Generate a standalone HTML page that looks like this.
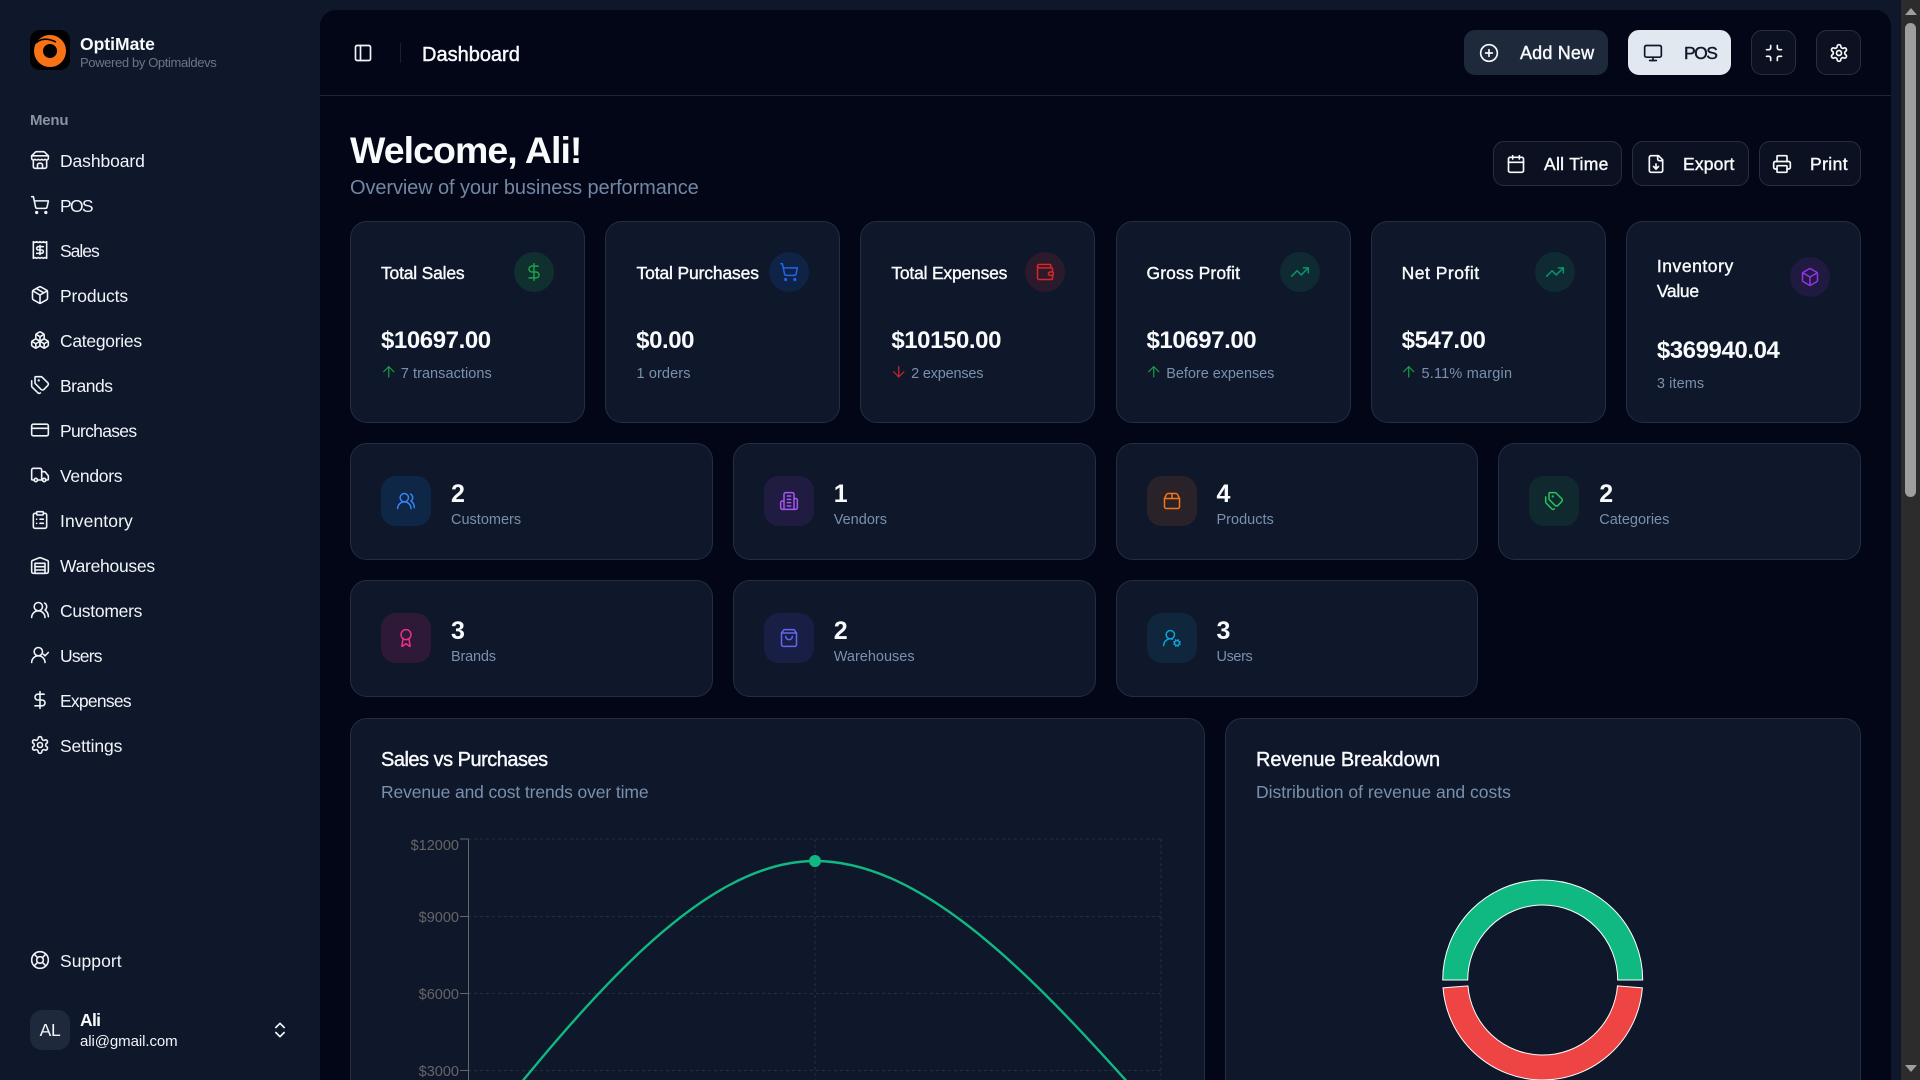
<!DOCTYPE html>
<html lang="en"><head><meta charset="utf-8"><title>OptiMate Dashboard</title>
<style>
*{box-sizing:border-box;margin:0;padding:0}
html,body{width:1920px;height:1080px;overflow:hidden;background:#0f172a}
body{font-family:"Liberation Sans",Arial,sans-serif;color:#f8fafc;position:relative}
svg.i{position:absolute;fill:none;stroke:currentColor;stroke-width:2;stroke-linecap:round;stroke-linejoin:round;overflow:visible}
.t{position:absolute;white-space:nowrap;line-height:20px;height:20px}
.m{-webkit-text-stroke:.4px currentColor}
.nav .t{left:60px;font-size:17.5px;letter-spacing:-.28px;color:#f1f5f9;margin-top:-.6px}
.nav svg.i{left:30px;width:20px;height:20px;color:#f1f5f9;stroke-width:1.9}
#panel{position:absolute;left:320px;top:10px;width:1571px;height:1070px;background:#020617;border-radius:16px 16px 0 0}
#hline{position:absolute;left:320px;top:95px;width:1571px;height:1px;background:#1e2433}
.b{position:absolute;height:45px;border-radius:11px;border:1px solid #262f40;background:#0b1120}
.b svg.i{width:20px;height:20px;top:11.5px}
.b .t{top:12px;font-size:17.5px}
.c{position:absolute;background:#0f172a;border:1px solid #242e40;border-radius:17px}
.sc{top:221px;height:202px;width:235.17px}
.sc .ti{left:30px;top:41px;font-size:17.5px}
.sc .v{left:30px;top:109px;font-size:24px;font-weight:700;letter-spacing:-.42px}
.sc .s{left:49.8px;top:142px;font-size:14.5px;color:#7a90ad}
.sc .ar{left:28.5px;top:141px;width:17.5px;height:17.5px;stroke-width:1.6}
.ci{position:absolute;width:40px;height:40px;border-radius:50%;top:30px;left:163px}
.ci svg.i{left:10px;top:10px;width:20px;height:20px;stroke-width:1.8}
.rc{width:362.75px;height:116.5px}
.bx{position:absolute;left:30px;top:32px;width:50px;height:50px;border-radius:15px}
.bx svg.i{left:15px;top:15px;width:20px;height:20px;stroke-width:1.8}
.rc .n{left:100px;top:40px;font-size:25px;font-weight:700}
.rc .l{left:100px;top:66px;font-size:14.5px;color:#7a90ad}
.cc{top:718px;height:362px;border-bottom:0;border-radius:17px 17px 0 0}
.cc .h{left:30px;top:31px;font-size:20px;-webkit-text-stroke:.4px currentColor}
.cc .d{left:30px;top:63px;font-size:17.5px;color:#7a90ad}
</style></head><body>

<!-- sidebar -->
<svg style="position:absolute;left:30px;top:30px" width="40" height="40" viewBox="0 0 40 40"><rect width="40" height="40" rx="10" fill="#000"/><circle cx="20" cy="21" r="11.5" fill="none" stroke="#f97316" stroke-width="9"/><path d="M6 13Q13 6 26 12" fill="none" stroke="#000" stroke-width="1.6"/><path d="M14 14Q22 9 27 15L22 14Q17 13 14 14Z" fill="#f97316"/></svg>
<div class="t" style="left:80px;top:34px;font-size:17.5px;font-weight:700">OptiMate</div>
<div class="t" style="left:80px;top:53px;font-size:13px;color:#6d7585;letter-spacing:-.37px">Powered by Optimaldevs</div>
<div class="t" style="left:30px;top:110.5px;font-size:15px;font-weight:700;color:#8a93a3;letter-spacing:-.2px">Menu</div>

<nav class="nav">
<svg class="i" style="top:150px" viewBox="0 0 24 24"><path d="m2 7 4.41-4.41A2 2 0 0 1 7.83 2h8.34a2 2 0 0 1 1.42.59L22 7"/><path d="M4 12v8a2 2 0 0 0 2 2h12a2 2 0 0 0 2-2v-8"/><path d="M15 22v-4a2 2 0 0 0-2-2h-2a2 2 0 0 0-2 2v4"/><path d="M2 7h20"/><path d="M22 7v3a2 2 0 0 1-2 2a2.7 2.7 0 0 1-1.59-.63.7.7 0 0 0-.82 0A2.7 2.7 0 0 1 16 12a2.7 2.7 0 0 1-1.59-.63.7.7 0 0 0-.82 0A2.7 2.7 0 0 1 12 12a2.7 2.7 0 0 1-1.59-.63.7.7 0 0 0-.82 0A2.7 2.7 0 0 1 8 12a2.7 2.7 0 0 1-1.59-.63.7.7 0 0 0-.82 0A2.7 2.7 0 0 1 4 12a2 2 0 0 1-2-2V7"/></svg>
<div class="t" style="top:151.5px;letter-spacing:-.1px">Dashboard</div>
<svg class="i" style="top:195px" viewBox="0 0 24 24"><circle cx="8" cy="21" r="1"/><circle cx="19" cy="21" r="1"/><path d="M2.05 2.05h2l2.66 12.42a2 2 0 0 0 2 1.58h9.78a2 2 0 0 0 1.95-1.57l1.65-7.43H5.12"/></svg>
<div class="t" style="top:196.5px;letter-spacing:-1.7px">POS</div>
<svg class="i" style="top:240px" viewBox="0 0 24 24"><path d="M4 2v20l2-1 2 1 2-1 2 1 2-1 2 1 2-1 2 1V2l-2 1-2-1-2 1-2-1-2 1-2-1-2 1Z"/><path d="M16 8h-6a2 2 0 1 0 0 4h4a2 2 0 1 1 0 4H8"/><path d="M12 17.5v-11"/></svg>
<div class="t" style="top:241.5px;letter-spacing:-1px">Sales</div>
<svg class="i" style="top:285px" viewBox="0 0 24 24"><path d="M11 21.73a2 2 0 0 0 2 0l7-4A2 2 0 0 0 21 16V8a2 2 0 0 0-1-1.73l-7-4a2 2 0 0 0-2 0l-7 4A2 2 0 0 0 3 8v8a2 2 0 0 0 1 1.73z"/><path d="M12 22V12"/><polyline points="3.29 7 12 12 20.71 7"/><path d="m7.5 4.27 9 5.15"/></svg>
<div class="t" style="top:286.5px;letter-spacing:-.13px">Products</div>
<svg class="i" style="top:330px" viewBox="0 0 24 24"><path d="M2.97 12.92A2 2 0 0 0 2 14.63v3.24a2 2 0 0 0 .97 1.71l3 1.8a2 2 0 0 0 2.06 0L12 19v-5.5l-5-3-4.03 2.42Z"/><path d="m7 16.5-4.74-2.85"/><path d="m7 16.5 5-3"/><path d="M7 16.5v5.17"/><path d="M12 13.5V19l3.97 2.38a2 2 0 0 0 2.06 0l3-1.8a2 2 0 0 0 .97-1.71v-3.24a2 2 0 0 0-.97-1.71L17 10.5l-5 3Z"/><path d="m17 16.5-5-3"/><path d="m17 16.5 4.74-2.85"/><path d="M17 16.5v5.17"/><path d="M7.97 4.42A2 2 0 0 0 7 6.13v4.37l5 3 5-3V6.13a2 2 0 0 0-.97-1.71l-3-1.8a2 2 0 0 0-2.06 0l-3 1.8Z"/><path d="M12 8 7.26 5.15"/><path d="m12 8 4.74-2.85"/><path d="M12 13.5V8"/></svg>
<div class="t" style="top:331.5px">Categories</div>
<svg class="i" style="top:375px" viewBox="0 0 24 24"><path d="M13.172 2a2 2 0 0 1 1.414.586l6.71 6.71a2.4 2.4 0 0 1 0 3.408l-4.592 4.592a2.4 2.4 0 0 1-3.408 0l-6.71-6.71A2 2 0 0 1 6 9.172V3a1 1 0 0 1 1-1z"/><path d="M2 7v6.172a2 2 0 0 0 .586 1.414l6.71 6.71a2.4 2.4 0 0 0 3.182.186"/><circle cx="10.5" cy="6.5" r=".5" fill="currentColor"/></svg>
<div class="t" style="top:376.5px;letter-spacing:-.5px">Brands</div>
<svg class="i" style="top:420px" viewBox="0 0 24 24"><rect x="2" y="5" width="20" height="14" rx="2"/><line x1="2" y1="10" x2="22" y2="10"/></svg>
<div class="t" style="top:421.5px;letter-spacing:-.7px">Purchases</div>
<svg class="i" style="top:465px" viewBox="0 0 24 24"><path d="M14 18V6a2 2 0 0 0-2-2H4a2 2 0 0 0-2 2v11a1 1 0 0 0 1 1h2"/><path d="M15 18H9"/><path d="M19 18h2a1 1 0 0 0 1-1v-3.65a1 1 0 0 0-.22-.624l-3.48-4.35A1 1 0 0 0 17.52 8H14"/><circle cx="17" cy="18" r="2"/><circle cx="7" cy="18" r="2"/></svg>
<div class="t" style="top:466.5px">Vendors</div>
<svg class="i" style="top:510px" viewBox="0 0 24 24"><rect x="8" y="2" width="8" height="4" rx="1"/><path d="M16 4h2a2 2 0 0 1 2 2v14a2 2 0 0 1-2 2H6a2 2 0 0 1-2-2V6a2 2 0 0 1 2-2h2"/><path d="M12 11h4"/><path d="M12 16h4"/><path d="M8 11h.01"/><path d="M8 16h.01"/></svg>
<div class="t" style="top:511.5px;letter-spacing:.1px">Inventory</div>
<svg class="i" style="top:555px" viewBox="0 0 24 24"><path d="M22 8.35V20a2 2 0 0 1-2 2H4a2 2 0 0 1-2-2V8.35A2 2 0 0 1 3.26 6.5l8-3.2a2 2 0 0 1 1.48 0l8 3.2A2 2 0 0 1 22 8.35Z"/><path d="M6 18h12"/><path d="M6 14h12"/><rect x="6" y="10" width="12" height="12"/></svg>
<div class="t" style="top:556.5px">Warehouses</div>
<svg class="i" style="top:600px" viewBox="0 0 24 24"><path d="M18 21a8 8 0 0 0-16 0"/><circle cx="10" cy="8" r="5"/><path d="M22 20c0-3.37-2-6.5-4-8a5 5 0 0 0-.45-8.3"/></svg>
<div class="t" style="top:601.5px">Customers</div>
<svg class="i" style="top:645px" viewBox="0 0 24 24"><path d="M2 21a8 8 0 0 1 16 0"/><circle cx="10" cy="8" r="5"/><path d="m16 11 2 2 4-4"/></svg>
<div class="t" style="top:646.5px;letter-spacing:-.8px">Users</div>
<svg class="i" style="top:690px" viewBox="0 0 24 24"><line x1="12" y1="2" x2="12" y2="22"/><path d="M17 5H9.5a3.5 3.5 0 0 0 0 7h5a3.5 3.5 0 0 1 0 7H6"/></svg>
<div class="t" style="top:691.5px;letter-spacing:-.75px">Expenses</div>
<svg class="i" style="top:735px" viewBox="0 0 24 24"><path d="M12.22 2h-.44a2 2 0 0 0-2 2v.18a2 2 0 0 1-1 1.73l-.43.25a2 2 0 0 1-2 0l-.15-.08a2 2 0 0 0-2.73.73l-.22.38a2 2 0 0 0 .73 2.73l.15.1a2 2 0 0 1 1 1.72v.51a2 2 0 0 1-1 1.74l-.15.09a2 2 0 0 0-.73 2.73l.22.38a2 2 0 0 0 2.73.73l.15-.08a2 2 0 0 1 2 0l.43.25a2 2 0 0 1 1 1.73V20a2 2 0 0 0 2 2h.44a2 2 0 0 0 2-2v-.18a2 2 0 0 1 1-1.73l.43-.25a2 2 0 0 1 2 0l.15.08a2 2 0 0 0 2.73-.73l.22-.39a2 2 0 0 0-.73-2.73l-.15-.08a2 2 0 0 1-1-1.74v-.5a2 2 0 0 1 1-1.74l.15-.09a2 2 0 0 0 .73-2.73l-.22-.38a2 2 0 0 0-2.73-.73l-.15.08a2 2 0 0 1-2 0l-.43-.25a2 2 0 0 1-1-1.73V4a2 2 0 0 0-2-2z"/><circle cx="12" cy="12" r="3"/></svg>
<div class="t" style="top:736.5px;letter-spacing:-.13px">Settings</div>
<svg class="i" style="top:950px" viewBox="0 0 24 24"><circle cx="12" cy="12" r="10"/><path d="m4.93 4.93 4.24 4.24"/><path d="m14.83 9.17 4.24-4.24"/><path d="m14.83 14.83 4.24 4.24"/><path d="m9.17 14.83-4.24 4.24"/><circle cx="12" cy="12" r="4"/></svg>
<div class="t" style="top:951.5px;letter-spacing:.05px">Support</div>
</nav>

<div style="position:absolute;left:30px;top:1010px;width:40px;height:40px;border-radius:12px;background:#1e293b;text-align:center;line-height:41px;font-size:17.5px;color:#f1f5f9;letter-spacing:-.3px">AL</div>
<div class="t" style="left:80px;top:1010px;font-size:17.5px;font-weight:700;letter-spacing:-.7px">Ali</div>
<div class="t" style="left:80px;top:1032.4px;font-size:15px;color:#f1f5f9;letter-spacing:-.08px">ali@gmail.com</div>
<svg class="i" style="left:270px;top:1020px;width:20px;height:20px;color:#f1f5f9" viewBox="0 0 24 24"><path d="m7 15 5 5 5-5"/><path d="m7 9 5-5 5 5"/></svg>

<!-- main -->
<div id="panel"></div>
<div id="hline"></div>
<svg class="i" style="left:353px;top:43px;width:20px;height:20px;color:#f1f5f9" viewBox="0 0 24 24"><rect x="3" y="3" width="18" height="18" rx="2"/><path d="M9 3v18"/></svg>
<div style="position:absolute;left:400px;top:43px;width:1px;height:20px;background:#1a2030"></div>
<div class="t" style="left:422px;top:44.6px;font-size:20px;-webkit-text-stroke:.45px currentColor">Dashboard</div>

<div class="b" style="left:1464px;top:30px;width:144px;background:#1e293b;border-color:#1e293b"><svg class="i" style="left:14px" viewBox="0 0 24 24"><circle cx="12" cy="12" r="10"/><path d="M8 12h8"/><path d="M12 8v8"/></svg><div class="t m" style="left:55px;font-size:18px;letter-spacing:.18px">Add New</div></div>
<div class="b" style="left:1628px;top:30px;width:103px;background:#e2e8f0;border-color:#e2e8f0;color:#0f172a"><svg class="i" style="left:14px" viewBox="0 0 24 24"><rect x="2" y="3" width="20" height="14" rx="2"/><line x1="8" y1="21" x2="16" y2="21"/><line x1="12" y1="17" x2="12" y2="21"/></svg><div class="t m" style="left:55px;letter-spacing:-1.5px">POS</div></div>
<div class="b" style="left:1751px;top:30px;width:45px"><svg class="i" style="left:11.5px" viewBox="0 0 24 24"><path d="M8 3v3a2 2 0 0 1-2 2H3"/><path d="M21 8h-3a2 2 0 0 1-2-2V3"/><path d="M3 16h3a2 2 0 0 1 2 2v3"/><path d="M16 21v-3a2 2 0 0 1 2-2h3"/></svg></div>
<div class="b" style="left:1816px;top:30px;width:45px"><svg class="i" style="left:11.5px" viewBox="0 0 24 24"><path d="M12.22 2h-.44a2 2 0 0 0-2 2v.18a2 2 0 0 1-1 1.73l-.43.25a2 2 0 0 1-2 0l-.15-.08a2 2 0 0 0-2.73.73l-.22.38a2 2 0 0 0 .73 2.73l.15.1a2 2 0 0 1 1 1.72v.51a2 2 0 0 1-1 1.74l-.15.09a2 2 0 0 0-.73 2.73l.22.38a2 2 0 0 0 2.73.73l.15-.08a2 2 0 0 1 2 0l.43.25a2 2 0 0 1 1 1.73V20a2 2 0 0 0 2 2h.44a2 2 0 0 0 2-2v-.18a2 2 0 0 1 1-1.73l.43-.25a2 2 0 0 1 2 0l.15.08a2 2 0 0 0 2.73-.73l.22-.39a2 2 0 0 0-.73-2.73l-.15-.08a2 2 0 0 1-1-1.74v-.5a2 2 0 0 1 1-1.74l.15-.09a2 2 0 0 0 .73-2.73l-.22-.38a2 2 0 0 0-2.73-.73l-.15.08a2 2 0 0 1-2 0l-.43-.25a2 2 0 0 1-1-1.73V4a2 2 0 0 0-2-2z"/><circle cx="12" cy="12" r="3"/></svg></div>

<h1 class="t" style="left:350px;top:130px;font-size:37.5px;line-height:40px;height:40px;letter-spacing:-.95px;font-weight:700">Welcome, Ali!</h1>
<div class="t" style="left:350px;top:178px;font-size:20px;color:#7287a3;letter-spacing:-.1px">Overview of your business performance</div>

<div class="b" style="left:1493px;top:141px;width:129px"><svg class="i" style="left:12px" viewBox="0 0 24 24"><path d="M8 2v4"/><path d="M16 2v4"/><rect x="3" y="4" width="18" height="18" rx="2"/><path d="M3 10h18"/></svg><div class="t m" style="left:50px;letter-spacing:.3px">All Time</div></div>
<div class="b" style="left:1632px;top:141px;width:117px"><svg class="i" style="left:13px" viewBox="0 0 24 24"><path d="M15 2H6a2 2 0 0 0-2 2v16a2 2 0 0 0 2 2h12a2 2 0 0 0 2-2V7Z"/><path d="M14 2v4a2 2 0 0 0 2 2h4"/><path d="M12 18v-6"/><path d="m9 15 3 3 3-3"/></svg><div class="t m" style="left:50px;letter-spacing:.15px">Export</div></div>
<div class="b" style="left:1759px;top:141px;width:102px"><svg class="i" style="left:12px" viewBox="0 0 24 24"><path d="M6 18H4a2 2 0 0 1-2-2v-5a2 2 0 0 1 2-2h16a2 2 0 0 1 2 2v5a2 2 0 0 1-2 2h-2"/><path d="M6 9V3a1 1 0 0 1 1-1h10a1 1 0 0 1 1 1v6"/><rect x="6" y="14" width="12" height="8" rx="1"/></svg><div class="t m" style="left:50px;letter-spacing:.4px">Print</div></div>

<!-- stat cards -->
<div class="c sc" style="left:350px"><div class="t ti m" style="letter-spacing:-.2px">Total Sales</div>
<div class="ci" style="background:#10302f;color:#16a34a"><svg class="i" viewBox="0 0 24 24"><line x1="12" y1="2" x2="12" y2="22"/><path d="M17 5H9.5a3.5 3.5 0 0 0 0 7h5a3.5 3.5 0 0 1 0 7H6"/></svg></div>
<div class="t v">$10697.00</div><svg class="i ar" style="color:#16a34a" viewBox="0 0 24 24"><path d="m5 12 7-7 7 7"/><path d="M12 19V5"/></svg><div class="t s" style="letter-spacing:.05px">7 transactions</div></div>

<div class="c sc" style="left:605.17px"><div class="t ti m" style="letter-spacing:-.15px;left:30.4px">Total Purchases</div>
<div class="ci" style="background:#0e2345;color:#2563eb"><svg class="i" viewBox="0 0 24 24"><circle cx="8" cy="21" r="1"/><circle cx="19" cy="21" r="1"/><path d="M2.05 2.05h2l2.66 12.42a2 2 0 0 0 2 1.58h9.78a2 2 0 0 0 1.95-1.57l1.65-7.43H5.12"/></svg></div>
<div class="t v">$0.00</div><div class="t s" style="left:30.4px;letter-spacing:.1px">1 orders</div></div>

<div class="c sc" style="left:860.33px"><div class="t ti m" style="letter-spacing:-.2px">Total Expenses</div>
<div class="ci" style="background:#2a1a2c;color:#dc2626;left:164px"><svg class="i" viewBox="0 0 24 24"><path d="M19 7V4a1 1 0 0 0-1-1H5a2 2 0 0 0 0 4h15a1 1 0 0 1 1 1v4h-3a2 2 0 0 0 0 4h3a1 1 0 0 0 1-1v-2a1 1 0 0 0-1-1"/><path d="M3 5v14a2 2 0 0 0 2 2h15a1 1 0 0 0 1-1v-4"/></svg></div>
<div class="t v">$10150.00</div><svg class="i ar" style="color:#dc2626" viewBox="0 0 24 24"><path d="M12 5v14"/><path d="m19 12-7 7-7-7"/></svg><div class="t s" style="letter-spacing:-.2px">2 expenses</div></div>

<div class="c sc" style="left:1115.5px"><div class="t ti m" style="letter-spacing:.1px">Gross Profit</div>
<div class="ci" style="background:#0f2a33;color:#059669"><svg class="i" viewBox="0 0 24 24"><polyline points="22 7 13.5 15.5 8.5 10.5 2 17"/><polyline points="16 7 22 7 22 13"/></svg></div>
<div class="t v">$10697.00</div><svg class="i ar" style="color:#16a34a" viewBox="0 0 24 24"><path d="m5 12 7-7 7 7"/><path d="M12 19V5"/></svg><div class="t s" style="letter-spacing:-.05px">Before expenses</div></div>

<div class="c sc" style="left:1370.67px"><div class="t ti m" style="letter-spacing:.5px">Net Profit</div>
<div class="ci" style="background:#0f2a33;color:#059669"><svg class="i" viewBox="0 0 24 24"><polyline points="22 7 13.5 15.5 8.5 10.5 2 17"/><polyline points="16 7 22 7 22 13"/></svg></div>
<div class="t v">$547.00</div><svg class="i ar" style="color:#16a34a" viewBox="0 0 24 24"><path d="m5 12 7-7 7 7"/><path d="M12 19V5"/></svg><div class="t s" style="letter-spacing:.2px">5.11% margin</div></div>

<div class="c sc" style="left:1625.83px"><div class="t ti m" style="top:34px;letter-spacing:.55px">Inventory</div><div class="t ti m" style="top:59px;letter-spacing:-.3px">Value</div>
<div class="ci" style="background:#201a40;color:#9333ea;top:34.7px"><svg class="i" viewBox="0 0 24 24"><path d="M21 8a2 2 0 0 0-1-1.73l-7-4a2 2 0 0 0-2 0l-7 4A2 2 0 0 0 3 8v8a2 2 0 0 0 1 1.73l7 4a2 2 0 0 0 2 0l7-4A2 2 0 0 0 21 16Z"/><path d="m3.3 7 8.7 5 8.7-5"/><path d="M12 22V12"/></svg></div>
<div class="t v" style="top:119px">$369940.04</div><div class="t s" style="left:30px;top:152px;letter-spacing:.1px">3 items</div></div>

<!-- count cards -->
<div class="c rc" style="left:350px;top:443px"><div class="bx" style="background:#0f2747;color:#3b82f6"><svg class="i" viewBox="0 0 24 24"><path d="M18 21a8 8 0 0 0-16 0"/><circle cx="10" cy="8" r="5"/><path d="M22 20c0-3.37-2-6.5-4-8a5 5 0 0 0-.45-8.3"/></svg></div><div class="t n">2</div><div class="t l">Customers</div></div>
<div class="c rc" style="left:732.75px;top:443px"><div class="bx" style="background:#201c41;color:#a855f7"><svg class="i" viewBox="0 0 24 24"><path d="M6 22V4a2 2 0 0 1 2-2h8a2 2 0 0 1 2 2v18Z"/><path d="M6 12H4a2 2 0 0 0-2 2v6a2 2 0 0 0 2 2h2"/><path d="M18 9h2a2 2 0 0 1 2 2v9a2 2 0 0 1-2 2h-2"/><path d="M10 6h4"/><path d="M10 10h4"/><path d="M10 14h4"/><path d="M10 18h4"/></svg></div><div class="t n">1</div><div class="t l">Vendors</div></div>
<div class="c rc" style="left:1115.5px;top:443px"><div class="bx" style="background:#2a2229;color:#f97316"><svg class="i" viewBox="0 0 24 24"><path d="M3 9h18v10a2 2 0 0 1-2 2H5a2 2 0 0 1-2-2V9Z"/><path d="m3 9 2.45-4.9A2 2 0 0 1 7.24 3h9.52a2 2 0 0 1 1.8 1.1L21 9"/><path d="M12 3v6"/></svg></div><div class="t n">4</div><div class="t l">Products</div></div>
<div class="c rc" style="left:1498.25px;top:443px"><div class="bx" style="background:#10292e;color:#22c55e"><svg class="i" viewBox="0 0 24 24"><path d="M13.172 2a2 2 0 0 1 1.414.586l6.71 6.71a2.4 2.4 0 0 1 0 3.408l-4.592 4.592a2.4 2.4 0 0 1-3.408 0l-6.71-6.71A2 2 0 0 1 6 9.172V3a1 1 0 0 1 1-1z"/><path d="M2 7v6.172a2 2 0 0 0 .586 1.414l6.71 6.71a2.4 2.4 0 0 0 3.182.186"/><circle cx="10.5" cy="6.5" r=".5" fill="currentColor"/></svg></div><div class="t n">2</div><div class="t l">Categories</div></div>

<div class="c rc" style="left:350px;top:580px"><div class="bx" style="background:#2e1a38;color:#ec2f8f"><svg class="i" viewBox="0 0 24 24"><path d="m15.477 12.89 1.515 8.526a.5.5 0 0 1-.81.47l-3.58-2.687a1 1 0 0 0-1.197 0l-3.586 2.686a.5.5 0 0 1-.81-.469l1.514-8.526"/><circle cx="12" cy="8" r="6"/></svg></div><div class="t n">3</div><div class="t l" style="letter-spacing:-.2px">Brands</div></div>
<div class="c rc" style="left:732.75px;top:580px"><div class="bx" style="background:#191e44;color:#6366f1"><svg class="i" viewBox="0 0 24 24"><path d="M6 2 3 6v14a2 2 0 0 0 2 2h14a2 2 0 0 0 2-2V6l-3-4Z"/><path d="M3 6h18"/><path d="M16 10a4 4 0 0 1-8 0"/></svg></div><div class="t n">2</div><div class="t l">Warehouses</div></div>
<div class="c rc" style="left:1115.5px;top:580px"><div class="bx" style="background:#0f263c;color:#0ea5d9"><svg class="i" viewBox="0 0 24 24"><path d="M2 21a8 8 0 0 1 10.434-7.62"/><circle cx="10" cy="8" r="5"/><circle cx="18" cy="18" r="3"/><path d="m19.5 14.3-.4.9"/><path d="m16.9 20.8-.4.9"/><path d="m21.7 19.5-.9-.4"/><path d="m15.2 16.9-.9-.4"/><path d="m21.7 16.5-.9.4"/><path d="m15.2 19.1-.9.4"/><path d="m19.5 21.7-.4-.9"/><path d="m16.9 15.2-.4-.9"/></svg></div><div class="t n">3</div><div class="t l" style="letter-spacing:-.4px">Users</div></div>

<!-- chart cards -->
<div class="c cc" style="left:350px;width:855px"><div class="t h" style="letter-spacing:-.5px">Sales vs Purchases</div><div class="t d" style="letter-spacing:-.12px">Revenue and cost trends over time</div></div>
<div class="c cc" style="left:1225px;width:636px"><div class="t h" style="letter-spacing:-.1px">Revenue Breakdown</div><div class="t d">Distribution of revenue and costs</div></div>

<svg style="position:absolute;left:0;top:0" width="1920" height="1080" viewBox="0 0 1920 1080">
<g fill="none" stroke="#252f41" stroke-width="1" stroke-dasharray="3 3"><path d="M468 839H1161M468 916.5H1161M468 993.5H1161M468 1070.5H1161M815 839V1080M1161 839V1080"/></g>
<g fill="none" stroke="#666" stroke-width="1"><path d="M468.5 839V1080M460 839H468.5M460 916.5H468.5M460 993.5H468.5M460 1070.5H468.5"/></g>
<g fill="#666" font-family="'Liberation Sans',Arial,sans-serif" font-size="14.5" text-anchor="end"><text x="459" y="850">$12000</text><text x="459" y="922">$9000</text><text x="459" y="999">$6000</text><text x="459" y="1076">$3000</text></g>
<path d="M468 1148C583.7 1004.5 699.3 861 815 861C930.3 861 1045.7 990.25 1161 1119.5" fill="none" stroke="#10b981" stroke-width="2.4"/>
<circle cx="815" cy="861" r="6" fill="#10b981"/>
<path d="M1442.7 980A100 100 0 0 1 1642.7 980L1617.7 980A75 75 0 0 0 1467.7 980Z" fill="#10b981" stroke="#fff" stroke-width="1"/>
<path d="M1642.39 987.85A100 100 0 0 1 1443.01 987.85L1467.93 985.89A75 75 0 0 0 1617.47 985.89Z" fill="#ef4444" stroke="#fff" stroke-width="1"/>
</svg>

<!-- scrollbar -->
<div style="position:absolute;left:1901px;top:0;width:19px;height:1080px;background:#2c2c2c"></div>
<div style="position:absolute;left:1905px;top:23px;width:11px;height:474px;border-radius:6px;background:#9e9e9e"></div>
<div style="position:absolute;left:1905px;top:8px;width:0;height:0;border-left:6px solid transparent;border-right:6px solid transparent;border-bottom:7px solid #9e9e9e"></div>
<div style="position:absolute;left:1905px;top:1065px;width:0;height:0;border-left:6px solid transparent;border-right:6px solid transparent;border-top:7px solid #9e9e9e"></div>
</body></html>
